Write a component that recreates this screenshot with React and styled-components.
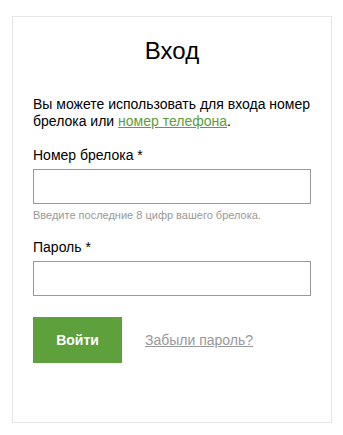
import React from "react";
import styled, { createGlobalStyle } from "styled-components";

const GlobalStyle = createGlobalStyle`
  body {
    margin: 0;
    background: #ffffff;
    font-family: "Liberation Sans", Arial, sans-serif;
    color: #000;
  }
`;

const Card = styled.div`
  box-sizing: border-box;
  width: 320px;
  margin: 16px 0 0 12px;
  height: 407px;
  border: 1px solid #e6e6e6;
  padding: 20px 20px 0 20px;
`;

const Title = styled.h1`
  margin: 0;
  font-size: 24px;
  font-weight: normal;
  text-align: center;
  line-height: 28px;
`;

const Intro = styled.p`
  margin: 31px 0 0 0;
  font-size: 14px;
  line-height: 17px;
`;

const GreenLink = styled.a`
  color: #5c9e3c;
  text-decoration: underline;
`;

const Field = styled.div`
  margin-top: ${(p) => p.$top}px;
  display: flex;
  flex-direction: column;
`;

const Label = styled.label`
  font-size: 14px;
  line-height: 17px;
  margin-bottom: 5px;
`;

const Input = styled.input`
  box-sizing: border-box;
  width: 278px;
  height: 35px;
  border: 1px solid #999;
  outline: none;
  margin: 0;
`;

const Hint = styled.div`
  margin-top: 5px;
  font-size: 11px;
  line-height: 13px;
  color: #999;
`;

const Actions = styled.div`
  margin-top: 21px;
  display: flex;
  align-items: center;
  gap: 23px;
`;

const Button = styled.button`
  width: 89px;
  height: 46px;
  border: none;
  background: #5ea03c;
  color: #fff;
  font-family: "Liberation Sans", Arial, sans-serif;
  font-size: 14px;
  font-weight: bold;
`;

const Forgot = styled.a`
  color: #999;
  font-size: 14px;
  text-decoration: underline;
`;

export default function App() {
  return (
    <>
      <GlobalStyle />
      <Card>
        <Title>Вход</Title>
        <Intro>
          Вы можете использовать для входа номер брелока или{" "}
          <GreenLink href="#">номер телефона</GreenLink>.
        </Intro>
        <Field $top={17}>
          <Label>Номер брелока *</Label>
          <Input type="text" />
          <Hint>Введите последние 8 цифр вашего брелока.</Hint>
        </Field>
        <Field $top={17}>
          <Label>Пароль *</Label>
          <Input type="password" />
        </Field>
        <Actions>
          <Button>Войти</Button>
          <Forgot href="#">Забыли пароль?</Forgot>
        </Actions>
      </Card>
    </>
  );
}
